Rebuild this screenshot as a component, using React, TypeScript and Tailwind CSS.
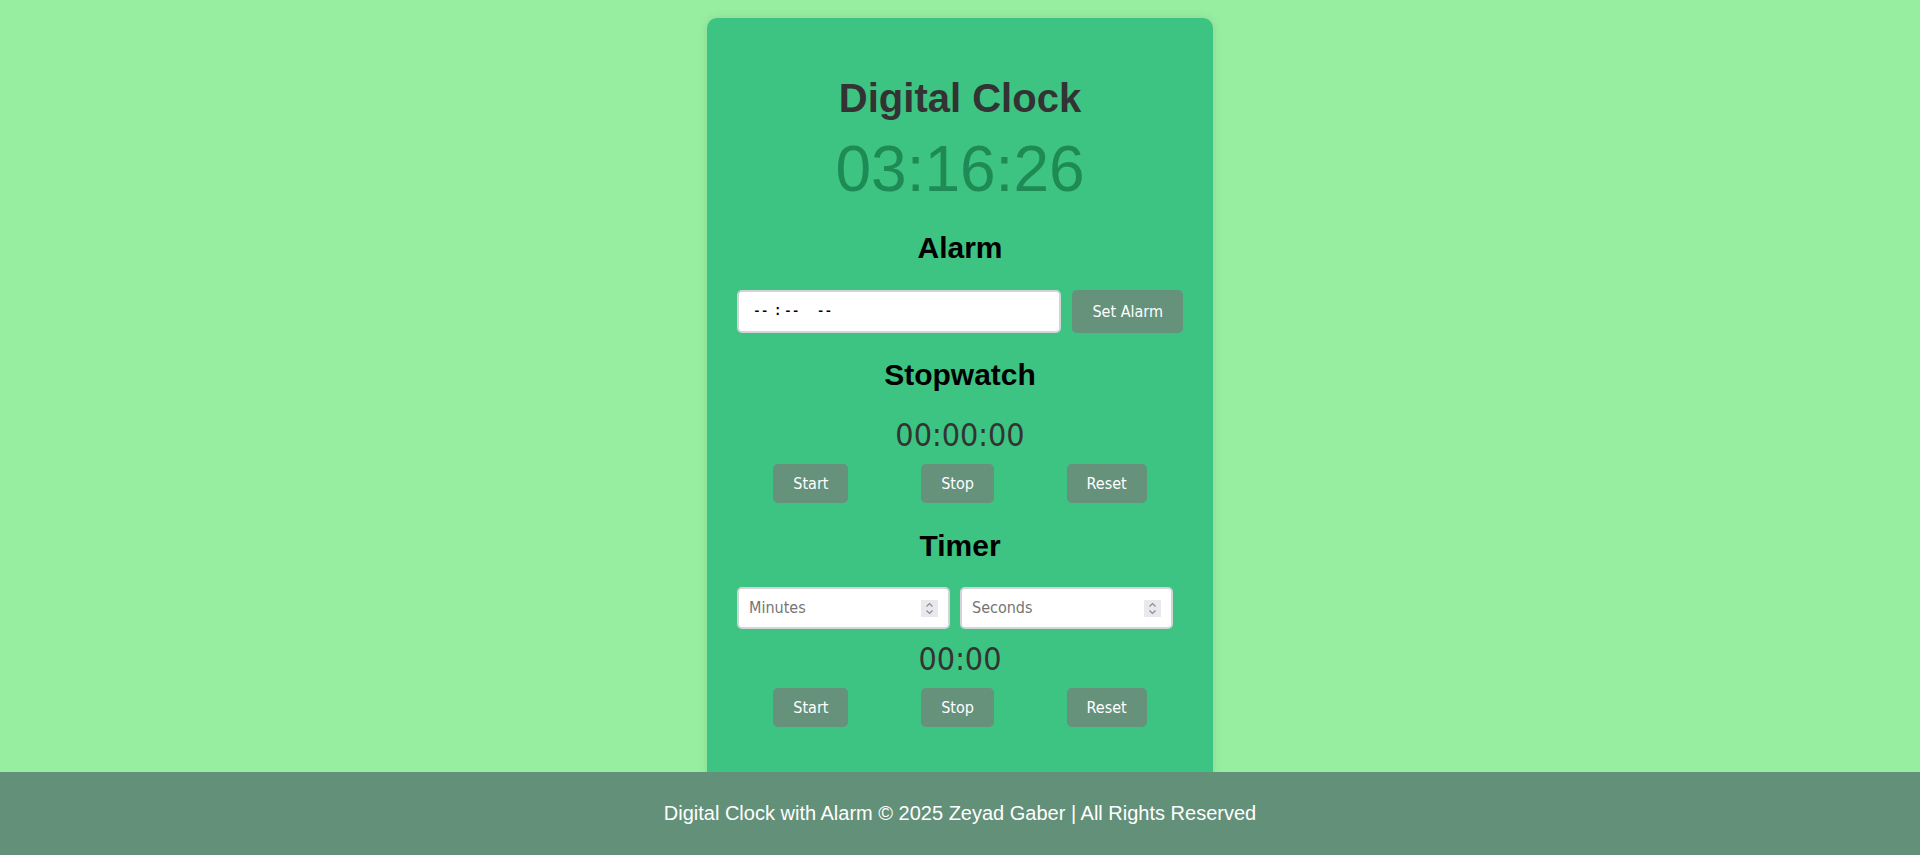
import { useState } from "react";

const arial = "font-['Liberation_Sans',Arial,sans-serif]";
const tahoma = "font-['DejaVu_Sans_Condensed','DejaVu_Sans',sans-serif]";

function Spinner() {
  return (
    <svg width="17" height="17" viewBox="0 0 17 17" className="shrink-0">
      <rect width="17" height="17" fill="#e9e9ed" />
      <path d="M5.5 6.5 8.5 3.5 11.5 6.5" fill="none" stroke="#8a8a90" strokeWidth="1.2" />
      <path d="M5.5 10.5 8.5 13.5 11.5 10.5" fill="none" stroke="#8a8a90" strokeWidth="1.2" />
    </svg>
  );
}

function Btn({ label }: { label: string }) {
  return (
    <button
      className={`${tahoma} rounded-[5px] bg-[#66917b] px-5 py-[10px] text-base leading-[19px] text-white`}
    >
      {label}
    </button>
  );
}

function NumberBox({ placeholder }: { placeholder: string }) {
  const [val, setVal] = useState("");
  return (
    <div className="flex h-[42px] w-[213px] items-center rounded-[5px] border-2 border-[#d3d3da] bg-white pr-[10px]">
      <input
        value={val}
        onChange={(e) => setVal(e.target.value)}
        placeholder={placeholder}
        className={`${tahoma} min-w-0 flex-1 bg-transparent pl-[10px] text-base text-black outline-none placeholder:text-[#757575]`}
      />
      <Spinner />
    </div>
  );
}

export default function App() {
  return (
    <div className="min-h-screen bg-[#98eea0]">
      <div className="flex justify-center">
        <div className="mt-[18px] flex w-[506px] flex-col items-center rounded-[10px] bg-[#3dc482] px-[30px] pb-[60px] pt-[57px] shadow-[0_0_10px_rgba(0,0,0,0.1)]">
          <h1 className={`${arial} text-[40px] font-bold leading-[46px] text-[#333]`}>Digital Clock</h1>
          <div className={`${arial} mt-[11px] text-[64px] leading-[74px] text-[#1e8a55]`}>03:16:26</div>

          <h2 className={`${arial} mt-[24px] text-[30px] font-bold leading-[35px] text-black`}>Alarm</h2>
          <div className="mt-[25px] flex h-[43px] w-full gap-[11px]">
            <div className="flex flex-1 items-center rounded-[5px] border-2 border-[#d3d3da] bg-white pl-[14px] font-['Liberation_Mono',monospace] text-[13px] font-bold text-black">
              <span>--</span>
              <span className="ml-[5px] text-[14px]">:</span>
              <span className="ml-[2px]">--</span>
              <span className="ml-[17px]">--</span>
            </div>
            <Btn label="Set Alarm" />
          </div>

          <h2 className={`${arial} mt-[24px] text-[30px] font-bold leading-[35px] text-black`}>Stopwatch</h2>
          <div className={`${tahoma} mt-[24px] text-[32px] leading-[38px] text-[#333]`}>00:00:00</div>
          <div className="mt-[10px] flex w-full justify-around">
            <Btn label="Start" />
            <Btn label="Stop" />
            <Btn label="Reset" />
          </div>

          <h2 className={`${arial} mt-[25px] text-[30px] font-bold leading-[35px] text-black`}>Timer</h2>
          <div className="mt-[24px] flex w-full gap-[10px]">
            <NumberBox placeholder="Minutes" />
            <NumberBox placeholder="Seconds" />
          </div>
          <div className={`${tahoma} mt-[11px] text-[32px] leading-[38px] text-[#333]`}>00:00</div>
          <div className="mt-[10px] flex w-full justify-around">
            <Btn label="Start" />
            <Btn label="Stop" />
            <Btn label="Reset" />
          </div>
        </div>
      </div>

      <footer
        className={`${arial} fixed bottom-0 left-0 right-0 bg-[#639079] py-[30px] text-center text-[20px] leading-[23px] text-white`}
      >
        Digital Clock with Alarm © 2025 Zeyad Gaber | All Rights Reserved
      </footer>
    </div>
  );
}
